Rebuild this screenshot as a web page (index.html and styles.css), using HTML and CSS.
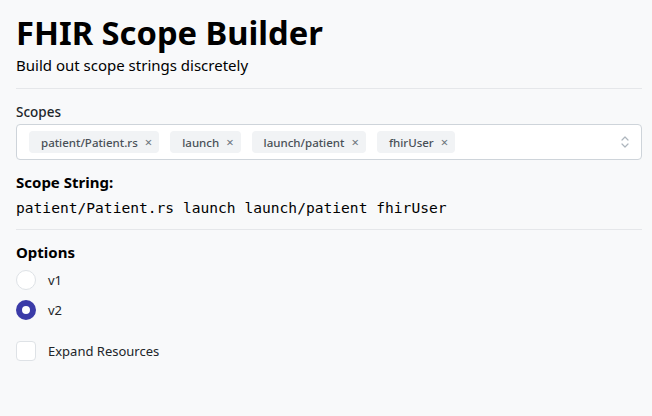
FILE: index.html
```html
<!DOCTYPE html>
<html>
<head>
<meta charset="utf-8">
<link rel="stylesheet" href="styles.css">
</head>
<body>
<main class="page">
  <header class="header">
    <h1 class="title">FHIR Scope Builder</h1>
    <p class="subtitle">Build out scope strings discretely</p>
  </header>
  <hr class="divider divider-top">
  <section class="field">
    <label class="field-label">Scopes</label>
    <div class="multiselect">
      <div class="chips">
        <span class="chip">patient/Patient.rs <span class="chip-x">×</span></span>
        <span class="chip">launch <span class="chip-x">×</span></span>
        <span class="chip">launch/patient <span class="chip-x">×</span></span>
        <span class="chip">fhirUser <span class="chip-x">×</span></span>
      </div>
      <svg class="chevron" width="10" height="14" viewBox="0 0 10 14" fill="none" stroke="#adb5bd" stroke-width="1.2" stroke-linecap="round" stroke-linejoin="round"><path d="M2 5 L5 2 L8 5"/><path d="M2 9 L5 12 L8 9"/></svg>
    </div>
  </section>
  <section class="result">
    <h2 class="section-title">Scope String:</h2>
    <code class="scope-string">patient/Patient.rs launch launch/patient fhirUser</code>
  </section>
  <hr class="divider divider-mid">
  <section class="options">
    <h2 class="section-title">Options</h2>
    <div class="radio-row"><span class="radio"></span><span class="opt-label">v1</span></div>
    <div class="radio-row"><span class="radio checked"></span><span class="opt-label">v2</span></div>
    <div class="check-row"><span class="checkbox"></span><span class="opt-label">Expand Resources</span></div>
  </section>
</main>
</body>
</html>
```

FILE: styles.css
```css
html, body {
  margin: 0;
  background: #f8f9fa;
}
body {
  font-family: "Noto Sans", "Open Sans", sans-serif;
  color: #000;
}
.page {
  padding: 12px 10px 16px 16px;
}
.title {
  margin: 0;
  font-size: 32.7px;
  font-weight: 700;
  line-height: 42px;
}
.subtitle {
  margin: 0;
  font-size: 15px;
  line-height: 22px;
}
.divider {
  border: 0;
  border-top: 1px solid #e5e7ea;
  margin: 0;
}
.divider-top {
  margin: 12px 0 14px 0;
}
.divider-mid {
  margin: 11px 0 12px 0;
}
.field-label {
  display: block;
  font-size: 13.5px;
  font-weight: 500;
  line-height: 18px;
  margin-bottom: 3px;
  color: #212529;
}
.multiselect {
  height: 34px;
  border: 1px solid #ced4da;
  border-radius: 4px;
  background: #fff;
  display: flex;
  align-items: center;
  padding: 0 11px 0 12px;
}
.chips {
  flex: 1;
  display: flex;
  gap: 11px;
}
.chip {
  display: inline-flex;
  align-items: center;
  height: 22px;
  padding: 0 7px 0 12px;
  background: #f1f3f5;
  border-radius: 4px;
  font-size: 11.5px;
  font-weight: 500;
  color: #495057;
}
.chip-x {
  margin-left: 7px;
  font-size: 13px;
  font-weight: 400;
  color: #6c757d;
}
.chevron {
  display: block;
}
.result {
  margin-top: 12px;
}
.section-title {
  margin: 0;
  font-size: 15px;
  font-weight: 700;
  line-height: 20px;
}
.scope-string {
  display: block;
  margin-top: 6px;
  font-family: "DejaVu Sans Mono", monospace;
  font-size: 14.6px;
  line-height: 20px;
  color: #000;
}
.options .section-title {
  margin-bottom: 3px;
}
.radio-row, .check-row {
  display: flex;
  align-items: center;
  gap: 12px;
  height: 30px;
}
.check-row {
  margin-top: 11px;
}
.radio {
  box-sizing: border-box;
  width: 20px;
  height: 20px;
  border-radius: 50%;
  border: 1px solid #dee2e6;
  background: #fff;
}
.radio.checked {
  border: 6px solid #3b3ba8;
  background: #fff;
}
.checkbox {
  box-sizing: border-box;
  width: 20px;
  height: 20px;
  border-radius: 4px;
  border: 1px solid #dee2e6;
  background: #fff;
}
.opt-label {
  font-size: 13px;
  color: #212529;
}
```
